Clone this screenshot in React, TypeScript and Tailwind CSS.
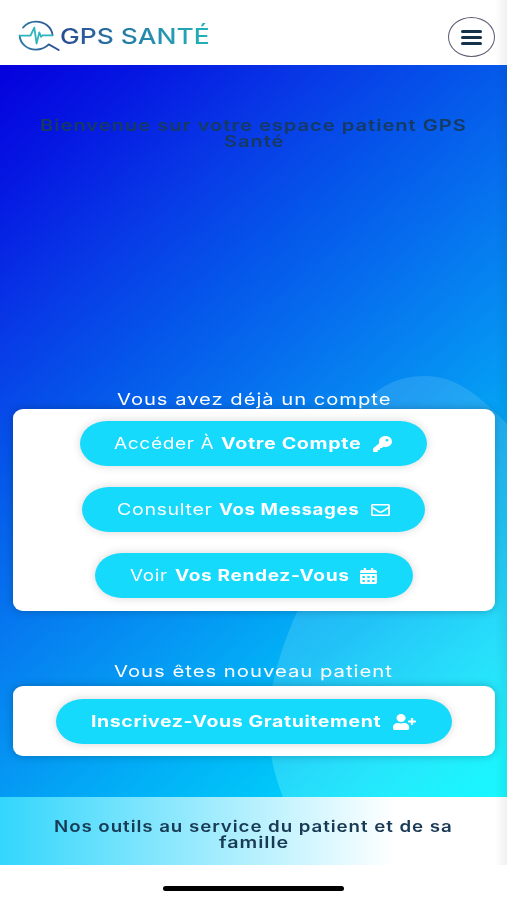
import { useLayoutEffect, useRef, useState, type ReactNode } from "react";
import { FaRegEnvelope, FaCalendarAlt, FaUserPlus } from "react-icons/fa";
import { FaKey } from "react-icons/fa6";

const FONT = "font-[Inter,'Open_Sans',sans-serif]";

/** Single line of text stretched horizontally to fill a given width. */
function Fit({ width, className = "", children }: { width: number; className?: string; children: ReactNode }) {
  const ref = useRef<HTMLSpanElement>(null);
  const [scale, setScale] = useState(1);
  useLayoutEffect(() => {
    if (ref.current) setScale(width / ref.current.offsetWidth);
  }, [width]);
  return (
    <span className="block shrink-0 text-left" style={{ width }}>
      <span
        ref={ref}
        className={`inline-block origin-left whitespace-nowrap ${className}`}
        style={{ transform: `scaleX(${scale})` }}
      >
        {children}
      </span>
    </span>
  );
}

function Logo() {
  return (
    <div className="flex items-center">
      <svg width="42" height="32" viewBox="18 20 42 32" fill="none" strokeLinecap="round" strokeLinejoin="round">
        <defs>
          <linearGradient id="ring" x1="18" y1="0" x2="60" y2="0" gradientUnits="userSpaceOnUse">
            <stop offset="0" stopColor="#2b7fa8" />
            <stop offset="1" stopColor="#2d4f93" />
          </linearGradient>
        </defs>
        <path d="M23 27.6C26 24 30.6 21.7 35.8 21.7c9 0 16.2 5.6 16.7 13.6" stroke="url(#ring)" strokeWidth="1.8" />
        <path d="M19.7 35.6c.4 8 7.4 14 16.1 14 5.2 0 9.7-1.9 13-5.2L58.7 50" stroke="url(#ring)" strokeWidth="1.9" />
        <path d="M19.7 35.6H30.5L34.3 27.6 36.6 43.6 39.3 32.4 41 36.8 42.6 35.3H52.5" stroke="#2bb5bd" strokeWidth="1.8" />
      </svg>
      <Fit
        width={150}
        className="bg-linear-to-r from-[#2a4a90] via-[#2583a8] to-[#22b3bb] bg-clip-text text-[21.5px] leading-[26px] font-medium text-transparent"
      >
        GPS SANTÉ
      </Fit>
    </div>
  );
}

function ActionButton({ className, children }: { className: string; children: ReactNode }) {
  return (
    <button
      className={`flex h-[45px] items-center rounded-[27px/22.5px] bg-[#16dafc] pt-px text-[15.5px] leading-5 tracking-[0.5px] text-white shadow-[0_0_10px_rgba(0,0,0,0.16)] ${className}`}
    >
      {children}
    </button>
  );
}

function Card({ children }: { children: ReactNode }) {
  return (
    <div className="mx-[12.5px] flex flex-col items-center gap-[21px] rounded-[10px/9px] bg-white py-[12.5px] shadow-[0_0_8px_rgba(0,0,0,0.25)]">
      {children}
    </div>
  );
}

export default function App() {
  return (
    <div className={`relative flex h-[900px] w-[507px] flex-col overflow-hidden bg-white ${FONT}`}>
      <header className="flex h-[65px] shrink-0 items-start justify-between pl-[18px] pr-3">
        <div className="pt-5">
          <Logo />
        </div>
        <button
          aria-label="Menu"
          className="mt-[17px] flex h-10 w-[47px] flex-col items-center justify-center gap-[3px] rounded-[50%] border border-[#5b5a70]"
        >
          <span className="h-[3px] w-[21px] rounded-full bg-[#14324a]" />
          <span className="h-[3px] w-[21px] rounded-full bg-[#14324a]" />
          <span className="h-[3px] w-[21px] rounded-full bg-[#14324a]" />
        </button>
      </header>

      <main className="relative h-[732px] shrink-0 bg-[linear-gradient(140deg,#0500dd_0%,#0518e2_11%,#0838e6_23%,#0556ea_35%,#0670ee_46%,#0595f3_61%,#02b0f6_72%,#00c8f9_83%,#10f0fc_100%)]">
        <svg className="absolute inset-0" width="507" height="732" viewBox="0 65 507 732">
          <defs>
            <linearGradient id="blob" x1="300" y1="540" x2="480" y2="780" gradientUnits="userSpaceOnUse">
              <stop offset="0" stopColor="#8fd8f4" stopOpacity="0.2" />
              <stop offset="0.35" stopColor="#5fdcf8" stopOpacity="0.34" />
              <stop offset="1" stopColor="#1cf6ff" stopOpacity="0.88" />
            </linearGradient>
          </defs>
          <path
            d="M283 797C262 745 262 690 297 612C325 545 318 376 425 376C456 376 480 396 507 424V797Z"
            fill="url(#blob)"
          />
        </svg>

        <div className="relative flex flex-col">
          <h1 className="flex flex-col items-center pt-[52px] text-[16px] leading-4 font-semibold tracking-[0.8px] text-[#173a63]">
            <Fit width={427}>Bienvenue sur votre espace patient GPS</Fit>
            <Fit width={60}>Santé</Fit>
          </h1>

          <h2 className="mt-[240px] flex h-[19.5px] justify-center text-[16.5px] leading-5 tracking-[0.8px] text-white">
            <Fit width={274}>Vous avez déjà un compte</Fit>
          </h2>
          <Card>
            <ActionButton className="w-[347px] gap-[7px] pl-[34px]">
              <Fit width={100}>Accéder À</Fit>
              <Fit width={140} className="font-bold">Votre Compte</Fit>
              <FaKey className="ml-[5px] h-4 w-[19px]" preserveAspectRatio="none" />
            </ActionButton>
            <ActionButton className="w-[343px] gap-[7px] pl-[35px]">
              <Fit width={95}>Consulter</Fit>
              <Fit width={140} className="font-bold">Vos Messages</Fit>
              <FaRegEnvelope className="ml-[5px] h-4 w-[19px]" preserveAspectRatio="none" />
            </ActionButton>
            <ActionButton className="w-[318px] gap-[7px] pl-[35px]">
              <Fit width={38}>Voir</Fit>
              <Fit width={174} className="font-bold">Vos Rendez-Vous</Fit>
              <FaCalendarAlt className="ml-1 h-4 w-[17px]" preserveAspectRatio="none" />
            </ActionButton>
          </Card>

          <h2 className="mt-[50px] flex h-[25.5px] justify-center text-[16.5px] leading-5 tracking-[0.8px] text-white">
            <Fit width={279}>Vous êtes nouveau patient</Fit>
          </h2>
          <Card>
            <ActionButton className="w-[396px] pl-[35px]">
              <Fit width={290} className="font-bold">Inscrivez-Vous Gratuitement</Fit>
              <FaUserPlus className="ml-3 h-4 w-[23px]" preserveAspectRatio="none" />
            </ActionButton>
          </Card>
        </div>
      </main>

      <section className="h-[68px] shrink-0 bg-[linear-gradient(90deg,#33d6fc_0%,#ffffff_78%)] pt-[21px]">
        <h2 className="flex flex-col items-center text-[16px] leading-4 font-semibold tracking-[0.8px] text-[#193a54]">
          <Fit width={399}>Nos outils au service du patient et de sa</Fit>
          <Fit width={70}>famille</Fit>
        </h2>
      </section>

      <footer className="flex flex-1 justify-center pt-[21px]">
        <div className="h-[5px] w-[181px] rounded-full bg-black" />
      </footer>

      <div className="absolute top-0 right-0 h-[865px] w-3 bg-linear-to-l from-black/6 to-transparent" />
    </div>
  );
}
